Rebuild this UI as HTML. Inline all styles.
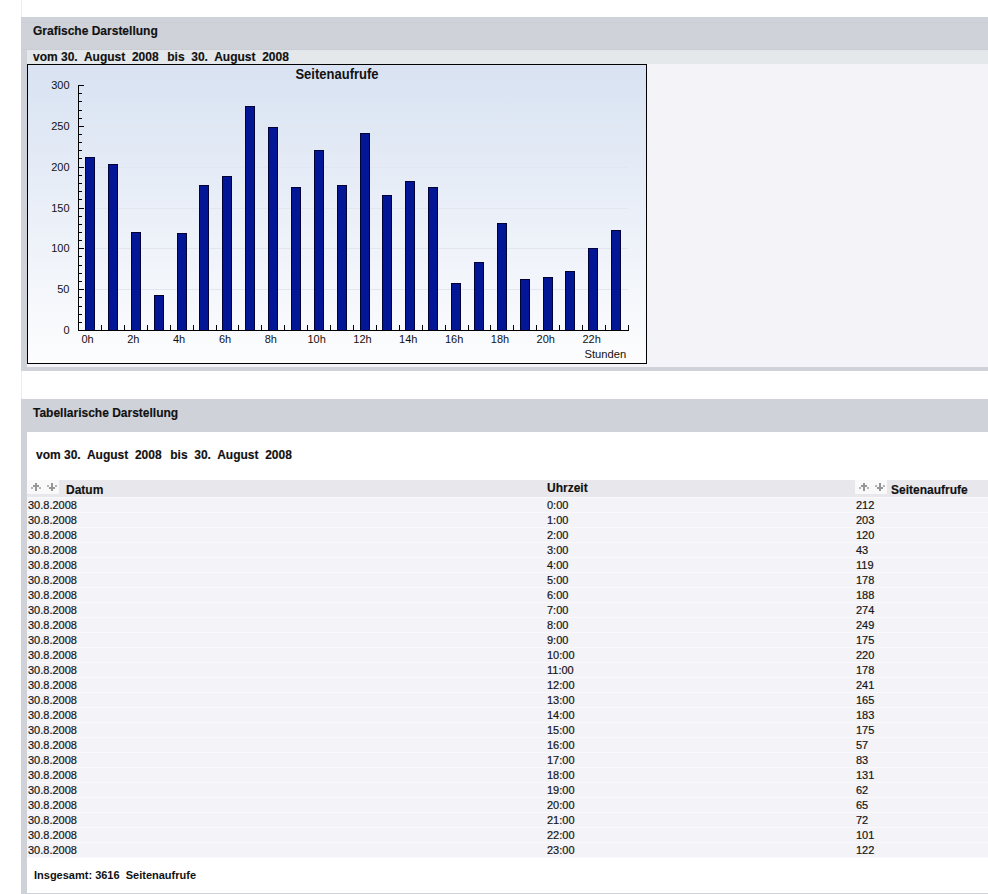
<!DOCTYPE html>
<html><head><meta charset="utf-8">
<style>
html,body{margin:0;padding:0;background:#fff;width:988px;height:894px;overflow:hidden;position:relative;font-family:"Liberation Sans", sans-serif;color:#111;}
.abs{position:absolute}
.vl{position:absolute;left:21px;top:0;width:1px;height:894px;background:#ececec}
.panel{position:absolute;left:21px;width:967px;background:#cfd2d9}
.hd{position:absolute;left:33px;font-size:12px;font-weight:bold;white-space:pre;line-height:14px;-webkit-text-stroke:0.15px #111}
.inner{position:absolute;left:27px;width:961px}
.vom{position:absolute;font-size:12px;font-weight:bold;white-space:pre;line-height:14px;-webkit-text-stroke:0.15px #111}
.yl{position:absolute;left:30px;width:39.5px;text-align:right;font-size:11px;line-height:13px;color:#111}
.xl{position:absolute;top:333px;width:40px;text-align:center;font-size:11px;line-height:13px;color:#111}
.tr{position:absolute;left:27px;width:961px;height:14px;background:#f3f3f8;font-size:11px;line-height:14px}
.tr span{position:absolute;top:0;-webkit-text-stroke:0.2px #222}
.c1{left:1px} .c2{left:520px} .c3{left:829px}
.th{position:absolute;top:480px;left:27px;width:961px;height:17px;background:#e8e8ec}
.si{position:absolute;top:480px}
.thl{position:absolute;font-size:12px;font-weight:bold;line-height:14px;white-space:pre;-webkit-text-stroke:0.15px #111}
</style></head><body>
<div class="vl"></div>
<div class="panel" style="top:17px;height:354px"></div>
<div class="hd" style="top:24px">Grafische Darstellung</div>
<div class="inner" style="top:50px;height:317px;background:#f4f4f8"></div>
<div class="inner" style="top:50px;height:14px;background:#e5e8eb"></div>
<div class="abs" style="left:21px;top:49px;width:967px;height:1px;background:#cacdd3"></div>
<div class="abs" style="left:21px;top:22px;width:967px;height:1px;background:#cbced5"></div>
<div class="vom" style="left:33px;top:50px">vom 30.  August  2008 <span style="display:inline-block;width:5.3px"></span>bis  30.  August  2008</div>
<svg width="988" height="894" viewBox="0 0 988 894" style="position:absolute;left:0;top:0" shape-rendering="crispEdges">
<defs><linearGradient id="g" x1="0" y1="0" x2="0" y2="1"><stop offset="0" stop-color="#d8e2f2"/><stop offset="1" stop-color="#fdfdfe"/></linearGradient></defs>
<rect x="27.5" y="64.5" width="619" height="299" fill="url(#g)" stroke="#000" stroke-width="1"/>
<rect x="79" y="289" width="549" height="1" fill="#e2e7ef"/>
<rect x="79" y="248" width="549" height="1" fill="#e2e7ef"/>
<rect x="79" y="208" width="549" height="1" fill="#e2e7ef"/>
<rect x="79" y="167" width="549" height="1" fill="#e2e7ef"/>
<rect x="79" y="126" width="549" height="1" fill="#e2e7ef"/>
<rect x="85" y="157" width="10" height="173" fill="#000236"/>
<rect x="86" y="158" width="8" height="172" fill="#031696"/>
<rect x="108" y="164" width="10" height="166" fill="#000236"/>
<rect x="109" y="165" width="8" height="165" fill="#031696"/>
<rect x="131" y="232" width="10" height="98" fill="#000236"/>
<rect x="132" y="233" width="8" height="97" fill="#031696"/>
<rect x="154" y="295" width="10" height="35" fill="#000236"/>
<rect x="155" y="296" width="8" height="34" fill="#031696"/>
<rect x="177" y="233" width="10" height="97" fill="#000236"/>
<rect x="178" y="234" width="8" height="96" fill="#031696"/>
<rect x="199" y="185" width="10" height="145" fill="#000236"/>
<rect x="200" y="186" width="8" height="144" fill="#031696"/>
<rect x="222" y="176" width="10" height="154" fill="#000236"/>
<rect x="223" y="177" width="8" height="153" fill="#031696"/>
<rect x="245" y="106" width="10" height="224" fill="#000236"/>
<rect x="246" y="107" width="8" height="223" fill="#031696"/>
<rect x="268" y="127" width="10" height="203" fill="#000236"/>
<rect x="269" y="128" width="8" height="202" fill="#031696"/>
<rect x="291" y="187" width="10" height="143" fill="#000236"/>
<rect x="292" y="188" width="8" height="142" fill="#031696"/>
<rect x="314" y="150" width="10" height="180" fill="#000236"/>
<rect x="315" y="151" width="8" height="179" fill="#031696"/>
<rect x="337" y="185" width="10" height="145" fill="#000236"/>
<rect x="338" y="186" width="8" height="144" fill="#031696"/>
<rect x="360" y="133" width="10" height="197" fill="#000236"/>
<rect x="361" y="134" width="8" height="196" fill="#031696"/>
<rect x="382" y="195" width="10" height="135" fill="#000236"/>
<rect x="383" y="196" width="8" height="134" fill="#031696"/>
<rect x="405" y="181" width="10" height="149" fill="#000236"/>
<rect x="406" y="182" width="8" height="148" fill="#031696"/>
<rect x="428" y="187" width="10" height="143" fill="#000236"/>
<rect x="429" y="188" width="8" height="142" fill="#031696"/>
<rect x="451" y="283" width="10" height="47" fill="#000236"/>
<rect x="452" y="284" width="8" height="46" fill="#031696"/>
<rect x="474" y="262" width="10" height="68" fill="#000236"/>
<rect x="475" y="263" width="8" height="67" fill="#031696"/>
<rect x="497" y="223" width="10" height="107" fill="#000236"/>
<rect x="498" y="224" width="8" height="106" fill="#031696"/>
<rect x="520" y="279" width="10" height="51" fill="#000236"/>
<rect x="521" y="280" width="8" height="50" fill="#031696"/>
<rect x="543" y="277" width="10" height="53" fill="#000236"/>
<rect x="544" y="278" width="8" height="52" fill="#031696"/>
<rect x="565" y="271" width="10" height="59" fill="#000236"/>
<rect x="566" y="272" width="8" height="58" fill="#031696"/>
<rect x="588" y="248" width="10" height="82" fill="#000236"/>
<rect x="589" y="249" width="8" height="81" fill="#031696"/>
<rect x="611" y="230" width="10" height="100" fill="#000236"/>
<rect x="612" y="231" width="8" height="99" fill="#031696"/>
<rect x="78" y="85" width="1" height="246" fill="#000"/>
<rect x="78" y="330" width="551" height="1" fill="#000"/>
<rect x="78" y="322" width="4" height="1" fill="#000"/>
<rect x="78" y="314" width="4" height="1" fill="#000"/>
<rect x="78" y="306" width="4" height="1" fill="#000"/>
<rect x="78" y="297" width="4" height="1" fill="#000"/>
<rect x="78" y="289" width="6" height="1" fill="#000"/>
<rect x="78" y="281" width="4" height="1" fill="#000"/>
<rect x="78" y="273" width="4" height="1" fill="#000"/>
<rect x="78" y="265" width="4" height="1" fill="#000"/>
<rect x="78" y="256" width="4" height="1" fill="#000"/>
<rect x="78" y="248" width="6" height="1" fill="#000"/>
<rect x="78" y="240" width="4" height="1" fill="#000"/>
<rect x="78" y="232" width="4" height="1" fill="#000"/>
<rect x="78" y="224" width="4" height="1" fill="#000"/>
<rect x="78" y="216" width="4" height="1" fill="#000"/>
<rect x="78" y="208" width="6" height="1" fill="#000"/>
<rect x="78" y="199" width="4" height="1" fill="#000"/>
<rect x="78" y="191" width="4" height="1" fill="#000"/>
<rect x="78" y="183" width="4" height="1" fill="#000"/>
<rect x="78" y="175" width="4" height="1" fill="#000"/>
<rect x="78" y="167" width="6" height="1" fill="#000"/>
<rect x="78" y="158" width="4" height="1" fill="#000"/>
<rect x="78" y="150" width="4" height="1" fill="#000"/>
<rect x="78" y="142" width="4" height="1" fill="#000"/>
<rect x="78" y="134" width="4" height="1" fill="#000"/>
<rect x="78" y="126" width="6" height="1" fill="#000"/>
<rect x="78" y="118" width="4" height="1" fill="#000"/>
<rect x="78" y="110" width="4" height="1" fill="#000"/>
<rect x="78" y="101" width="4" height="1" fill="#000"/>
<rect x="78" y="93" width="4" height="1" fill="#000"/>
<rect x="78" y="85" width="6" height="1" fill="#000"/>
<rect x="101" y="325" width="1" height="5" fill="#000"/>
<rect x="124" y="325" width="1" height="5" fill="#000"/>
<rect x="147" y="325" width="1" height="5" fill="#000"/>
<rect x="170" y="325" width="1" height="5" fill="#000"/>
<rect x="193" y="325" width="1" height="5" fill="#000"/>
<rect x="216" y="325" width="1" height="5" fill="#000"/>
<rect x="238" y="325" width="1" height="5" fill="#000"/>
<rect x="261" y="325" width="1" height="5" fill="#000"/>
<rect x="284" y="325" width="1" height="5" fill="#000"/>
<rect x="307" y="325" width="1" height="5" fill="#000"/>
<rect x="330" y="325" width="1" height="5" fill="#000"/>
<rect x="353" y="325" width="1" height="5" fill="#000"/>
<rect x="376" y="325" width="1" height="5" fill="#000"/>
<rect x="399" y="325" width="1" height="5" fill="#000"/>
<rect x="422" y="325" width="1" height="5" fill="#000"/>
<rect x="445" y="325" width="1" height="5" fill="#000"/>
<rect x="468" y="325" width="1" height="5" fill="#000"/>
<rect x="490" y="325" width="1" height="5" fill="#000"/>
<rect x="513" y="325" width="1" height="5" fill="#000"/>
<rect x="536" y="325" width="1" height="5" fill="#000"/>
<rect x="559" y="325" width="1" height="5" fill="#000"/>
<rect x="582" y="325" width="1" height="5" fill="#000"/>
<rect x="605" y="325" width="1" height="5" fill="#000"/>
<rect x="628" y="325" width="1" height="5" fill="#000"/>
</svg>
<div class="abs" style="left:27px;width:620px;font-size:13px;font-weight:bold;text-align:center;line-height:16px;top:65.5px;color:#111;transform:scaleY(1.1);transform-origin:0 0">Seitenaufrufe</div>
<div class="yl" style="top:324.0px">0</div>
<div class="yl" style="top:283.2px">50</div>
<div class="yl" style="top:242.3px">100</div>
<div class="yl" style="top:201.5px">150</div>
<div class="yl" style="top:160.7px">200</div>
<div class="yl" style="top:119.8px">250</div>
<div class="yl" style="top:79.0px">300</div>
<div class="xl" style="left:67.5px">0h</div>
<div class="xl" style="left:113.3px">2h</div>
<div class="xl" style="left:159.1px">4h</div>
<div class="xl" style="left:205.0px">6h</div>
<div class="xl" style="left:250.8px">8h</div>
<div class="xl" style="left:296.6px">10h</div>
<div class="xl" style="left:342.5px">12h</div>
<div class="xl" style="left:388.3px">14h</div>
<div class="xl" style="left:434.1px">16h</div>
<div class="xl" style="left:480.0px">18h</div>
<div class="xl" style="left:525.8px">20h</div>
<div class="xl" style="left:571.6px">22h</div>
<div class="abs" style="left:584.5px;top:347.5px;font-size:11.2px;line-height:13px">Stunden</div>

<div class="panel" style="top:399px;height:495px"></div>
<div class="hd" style="top:406px">Tabellarische Darstellung</div>
<div class="inner" style="top:432px;height:461px;background:#fff"></div>
<div class="vom" style="left:36px;top:448px">vom 30.  August  2008 <span style="display:inline-block;width:5.3px"></span>bis  30.  August  2008</div>
<div class="abs" style="left:27px;top:497px;width:961px;height:361px;background:#fafafc"></div>
<div class="th"></div>
<svg class="si" style="left:27px" width="32" height="14" viewBox="0 0 32 14" shape-rendering="crispEdges"><rect x="0" y="0" width="32" height="14" fill="#f9f9fa"/><g fill="#969696"><rect x="8" y="3" width="2" height="8"/><rect x="6" y="5" width="6" height="2"/><rect x="4" y="7" width="2" height="2" fill-opacity="0.7"/><rect x="12" y="7" width="2" height="2" fill-opacity="0.7"/><rect x="24" y="3" width="2" height="8"/><rect x="22" y="7" width="6" height="2"/><rect x="20" y="5" width="2" height="2" fill-opacity="0.7"/><rect x="28" y="5" width="2" height="2" fill-opacity="0.7"/></g></svg>
<div class="thl" style="left:66px;top:483px">Datum</div>
<div class="thl" style="left:547px;top:481px">Uhrzeit</div>
<svg class="si" style="left:855px" width="32" height="14" viewBox="0 0 32 14" shape-rendering="crispEdges"><rect x="0" y="0" width="32" height="14" fill="#f9f9fa"/><g fill="#969696"><rect x="8" y="3" width="2" height="8"/><rect x="6" y="5" width="6" height="2"/><rect x="4" y="7" width="2" height="2" fill-opacity="0.7"/><rect x="12" y="7" width="2" height="2" fill-opacity="0.7"/><rect x="24" y="3" width="2" height="8"/><rect x="22" y="7" width="6" height="2"/><rect x="20" y="5" width="2" height="2" fill-opacity="0.7"/><rect x="28" y="5" width="2" height="2" fill-opacity="0.7"/></g></svg>
<div class="thl" style="left:891px;top:483px">Seitenaufrufe</div>
<div class="tr" style="top:498px"><span class="c1">30.8.2008</span><span class="c2">0:00</span><span class="c3">212</span></div>
<div class="tr" style="top:513px"><span class="c1">30.8.2008</span><span class="c2">1:00</span><span class="c3">203</span></div>
<div class="tr" style="top:528px"><span class="c1">30.8.2008</span><span class="c2">2:00</span><span class="c3">120</span></div>
<div class="tr" style="top:543px"><span class="c1">30.8.2008</span><span class="c2">3:00</span><span class="c3">43</span></div>
<div class="tr" style="top:558px"><span class="c1">30.8.2008</span><span class="c2">4:00</span><span class="c3">119</span></div>
<div class="tr" style="top:573px"><span class="c1">30.8.2008</span><span class="c2">5:00</span><span class="c3">178</span></div>
<div class="tr" style="top:588px"><span class="c1">30.8.2008</span><span class="c2">6:00</span><span class="c3">188</span></div>
<div class="tr" style="top:603px"><span class="c1">30.8.2008</span><span class="c2">7:00</span><span class="c3">274</span></div>
<div class="tr" style="top:618px"><span class="c1">30.8.2008</span><span class="c2">8:00</span><span class="c3">249</span></div>
<div class="tr" style="top:633px"><span class="c1">30.8.2008</span><span class="c2">9:00</span><span class="c3">175</span></div>
<div class="tr" style="top:648px"><span class="c1">30.8.2008</span><span class="c2">10:00</span><span class="c3">220</span></div>
<div class="tr" style="top:663px"><span class="c1">30.8.2008</span><span class="c2">11:00</span><span class="c3">178</span></div>
<div class="tr" style="top:678px"><span class="c1">30.8.2008</span><span class="c2">12:00</span><span class="c3">241</span></div>
<div class="tr" style="top:693px"><span class="c1">30.8.2008</span><span class="c2">13:00</span><span class="c3">165</span></div>
<div class="tr" style="top:708px"><span class="c1">30.8.2008</span><span class="c2">14:00</span><span class="c3">183</span></div>
<div class="tr" style="top:723px"><span class="c1">30.8.2008</span><span class="c2">15:00</span><span class="c3">175</span></div>
<div class="tr" style="top:738px"><span class="c1">30.8.2008</span><span class="c2">16:00</span><span class="c3">57</span></div>
<div class="tr" style="top:753px"><span class="c1">30.8.2008</span><span class="c2">17:00</span><span class="c3">83</span></div>
<div class="tr" style="top:768px"><span class="c1">30.8.2008</span><span class="c2">18:00</span><span class="c3">131</span></div>
<div class="tr" style="top:783px"><span class="c1">30.8.2008</span><span class="c2">19:00</span><span class="c3">62</span></div>
<div class="tr" style="top:798px"><span class="c1">30.8.2008</span><span class="c2">20:00</span><span class="c3">65</span></div>
<div class="tr" style="top:813px"><span class="c1">30.8.2008</span><span class="c2">21:00</span><span class="c3">72</span></div>
<div class="tr" style="top:828px"><span class="c1">30.8.2008</span><span class="c2">22:00</span><span class="c3">101</span></div>
<div class="tr" style="top:843px"><span class="c1">30.8.2008</span><span class="c2">23:00</span><span class="c3">122</span></div>
<div class="abs" style="left:34px;top:869px;font-size:11px;font-weight:bold;white-space:pre;line-height:13px">Insgesamt: 3616  Seitenaufrufe</div>
</body></html>
